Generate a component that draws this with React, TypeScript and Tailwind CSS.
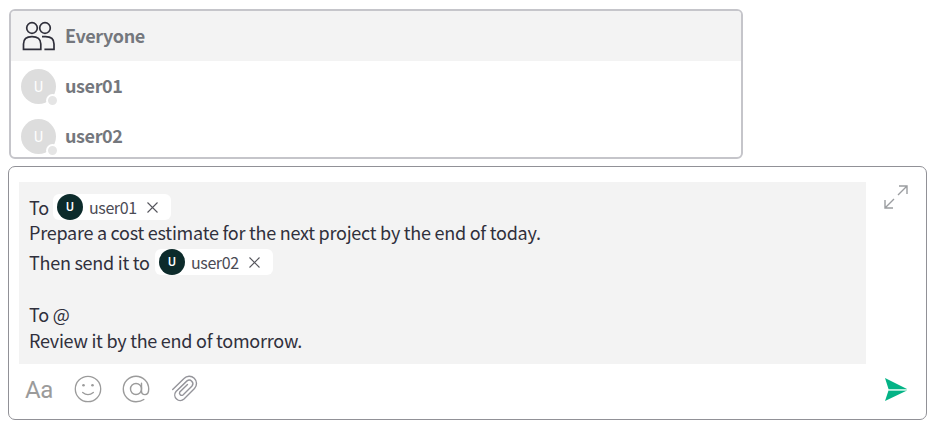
import type { ReactNode } from "react";

function PeopleIcon() {
  return (
    <svg width="36" height="34" viewBox="0 0 36 34" fill="none" stroke="#2f2f3a" strokeWidth="1.7" className="shrink-0">
      <circle cx="11" cy="9" r="5.3" />
      <circle cx="24" cy="9" r="5.3" />
      <path d="M2.500 30.300V25C2.500 20 5.500 17.700 11 17.700S19.800 20 19.800 25V30.300Z" />
      <path d="M21 17.700H24.500C30 17.700 33 20 33 25V30.300H23.400" />
    </svg>
  );
}

function Member({ name }: { name: string }) {
  return (
    <li className="flex h-[50px] shrink-0 items-center pl-[10px]">
      <span className="relative mr-[9px] flex size-[35px] items-center justify-center rounded-full bg-[#dddddd] pt-[2px] font-['Roboto',sans-serif] text-[14px] leading-none font-normal tracking-normal text-white">
        U
        <span className="absolute -right-[3px] -bottom-[3px] size-[13px] rounded-full border-2 border-white bg-[#e5e5e5]" />
      </span>
      <span className="-mt-[2px]">{name}</span>
    </li>
  );
}

function Chip({ name }: { name: string }) {
  return (
    <span className="flex h-[26px] w-[118px] shrink-0 items-center rounded-[6px] bg-white pl-[4px] text-[16px] tracking-[-0.4px] text-[#4b4b55]">
      <span className="mr-[6px] flex size-[26px] shrink-0 items-center justify-center rounded-full bg-[#0c2b2b] font-['Roboto',sans-serif] text-[12px] font-medium leading-none tracking-normal text-white">
        U
      </span>
      <span className="w-[48px] leading-[23px]">{name}</span>
      <svg width="11" height="11" viewBox="0 0 11 11" stroke="#55555c" strokeWidth="1.1" className="ml-[10px]">
        <path d="M.5.5l10 10M10.500.5l-10 10" />
      </svg>
    </span>
  );
}

function Line({ children }: { children?: ReactNode }) {
  return <div className="h-[26px] whitespace-pre leading-[26px]">{children}</div>;
}

export default function App() {
  return (
    <main className="flex h-[430px] w-[937px] flex-col overflow-hidden bg-white pt-[9px] pl-[8px] font-['Noto_Sans_CJK_JP',sans-serif]">
      <ul className="ml-px flex h-[150px] w-[734px] flex-col overflow-hidden rounded-[6px] border-2 border-[#c5c5ca] text-[18px] font-bold tracking-[-0.4px] text-[#74777d]">
        <li className="flex h-[50px] shrink-0 items-center bg-[#f3f3f3] pl-[10px]">
          <PeopleIcon />
          <span className="-mt-[2px] ml-[8px]">Everyone</span>
        </li>
        <Member name="user01" />
        <Member name="user02" />
      </ul>

      <section className="mt-[7px] h-[254px] w-[919px] rounded-[7px] border border-[#919197] pt-[15px] pl-[10px]">
        <div className="flex">
          <div className="h-[182px] w-[847px] bg-[#f3f3f3] pt-[12px] pl-[10px] text-[18px] tracking-[-0.25px] text-[#30303c]">
            <div className="flex h-[25px]">
              <span className="w-[24px] leading-[26px]">To</span>
              <Chip name="user01" />
            </div>
            <Line>Prepare a cost estimate for the next project by the end of today.</Line>
            <div className="mt-[4px] flex h-[26px]">
              <span className="w-[126px] leading-[26px] whitespace-nowrap">Then send it to</span>
              <Chip name="user02" />
            </div>
            <Line />
            <Line>To @</Line>
            <Line>Review it by the end of tomorrow.</Line>
          </div>
          <svg width="24" height="24" viewBox="0 0 24 24" fill="none" stroke="#9b9da0" strokeWidth="1.4" className="mt-[3px] ml-[18px]">
            <path d="M14 10L23 1M15 1H23V9M10 14L1 23M1 15V23H9" />
          </svg>
        </div>
        <div className="flex h-[50px] items-center pl-[7px] text-[#9b9b9b]">
          <span className="-ml-px w-[28px] pt-px font-['Roboto',sans-serif] text-[24px] leading-none tracking-[-0.5px]">Aa</span>
          <svg width="28" height="28" viewBox="0 0 28 28" fill="none" stroke="#9b9b9b" strokeWidth="1.3" className="ml-[21px]">
            <circle cx="14" cy="14" r="12.700" />
            <path d="M8.700 17.500Q14 21.800 19.300 17.500" strokeWidth="1.400" strokeLinecap="round" />
            <circle cx="9.500" cy="10.300" r="1.300" fill="#9b9b9b" stroke="none" />
            <circle cx="18.500" cy="10.300" r="1.300" fill="#9b9b9b" stroke="none" />
          </svg>
          <svg width="28" height="28" viewBox="0 0 28 28" fill="none" stroke="#9b9b9b" strokeWidth="1.4" strokeLinecap="round" className="ml-[20px]">
            <circle cx="14" cy="14" r="5.500" />
            <path d="M19.500 8.300V16C19.500 18.500 21 19.600 23 19.600C25.500 19.600 26.700 17.800 26.700 14A12.700 12.700 0 1 0 14 26.700C17.500 26.700 20 25.800 21.800 24.500" />
          </svg>
          <svg width="28" height="28" viewBox="0 0 28 28" fill="none" stroke="#94949a" strokeWidth="1.4" strokeLinecap="round" className="ml-[21px]">
            <path d="M1.700 14.500L13 3.500A7.200 7.200 0 0 1 23.500 13.500L13 24A5.500 5.500 0 0 1 5 16.500L16 5.900A3.600 3.600 0 0 1 21 11L12 20A2.300 2.300 0 0 1 8.800 16.900L16.500 9.400" />
          </svg>
          <svg width="24" height="24" viewBox="0 0 24 24" className="mt-[1px] ml-[685px]">
            <path d="M1 0L23 11H4.500ZM1 23L23 12.500H4.500Z" fill="#04b386" />
            <path d="M4.500 11H23V12.500H4.500Z" fill="#b9f0df" />
          </svg>
        </div>
      </section>
    </main>
  );
}
